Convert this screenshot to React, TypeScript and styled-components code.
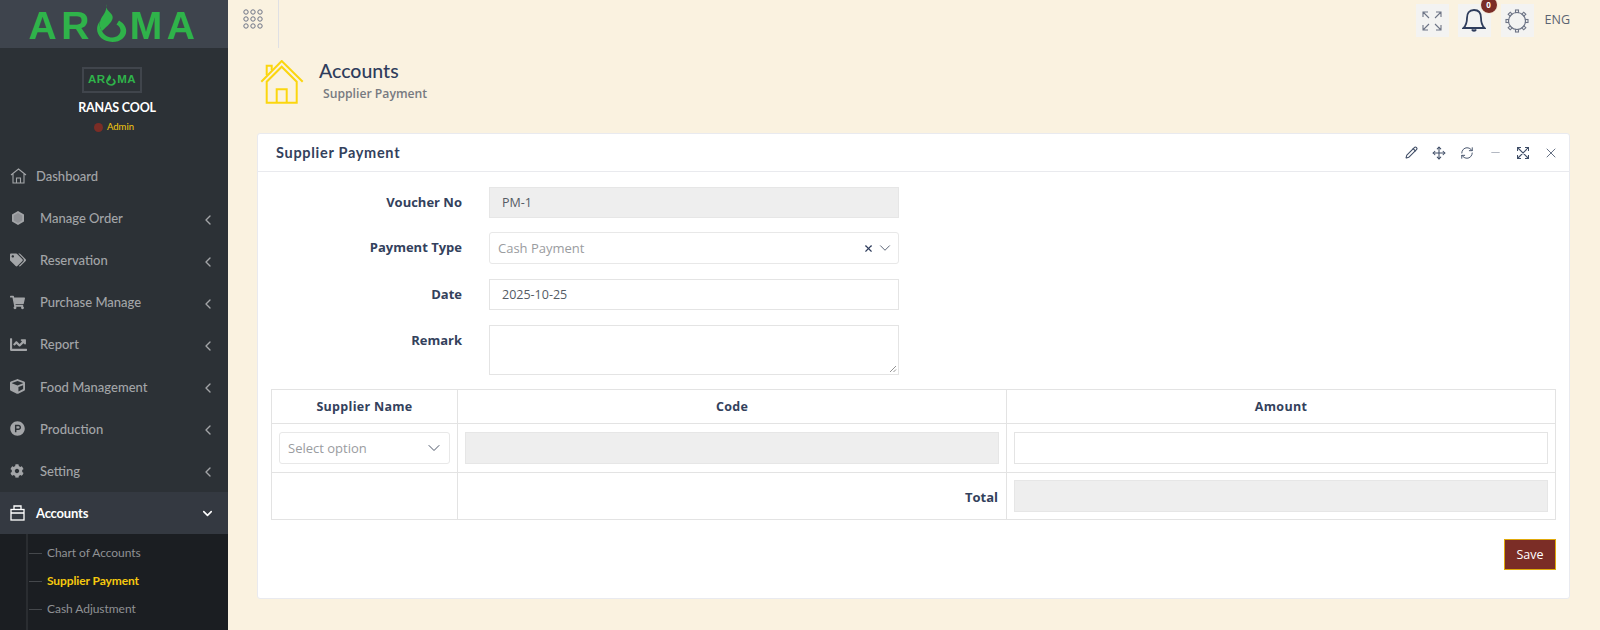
import React from "react";
import styled, { createGlobalStyle } from "styled-components";
import { FaTags, FaShoppingCart, FaChartLine, FaCube, FaProductHunt, FaCog } from "react-icons/fa";
import { ChevronLeft, ChevronDown, X, Pencil, Move, RefreshCw, Minus } from "lucide-react";

const Global = createGlobalStyle`
  html, body { margin: 0; padding: 0; height: 630px; overflow: hidden; }
  body { font-family: "Open Sans", "Noto Sans", sans-serif; background: #faf2e0; }
  * { box-sizing: border-box; }
`;

const Page = styled.div`
  display: flex;
  width: 1600px;
  height: 630px;
  overflow: hidden;
`;

const Sidebar = styled.aside`
  width: 228px;
  flex: none;
  background: #2c3136;
  display: flex;
  flex-direction: column;
  font-family: "Lato", sans-serif;
`;

const Brand = styled.div`
  height: 48px;
  background: #3e444d;
  display: flex;
  align-items: flex-end;
  justify-content: center;
  padding: 0 0 3px 0;
  color: #2fb34a;
  font: bold 39px/1 "Liberation Sans", sans-serif;
  letter-spacing: 4.5px;
`;

const Profile = styled.div`
  display: flex;
  flex-direction: column;
  align-items: center;
  padding: 19px 0 0 6px;
  height: 107px;
`;

const MiniLogo = styled.div`
  width: 60px;
  height: 26px;
  margin-left: -10px;
  border: 2px solid #40454c;
  color: #2fb34a;
  display: flex;
  align-items: center;
  justify-content: center;
  font: bold 11.5px/1 "Liberation Sans", sans-serif;
  letter-spacing: 0.4px;
`;

const UserName = styled.div`
  margin-top: 7px;
  color: #fff;
  font-size: 12.5px;
  font-weight: 700;
  letter-spacing: -0.2px;
  line-height: 16px;
`;

const UserRole = styled.div`
  margin: 3px 0 0 -6px;
  color: #f6c90e;
  font-size: 9.5px;
  line-height: 16px;
  display: flex;
  align-items: center;
  gap: 4px;
`;

const Dot = styled.span`
  width: 9px;
  height: 9px;
  border-radius: 50%;
  background: #7b2d26;
`;

const Nav = styled.nav`
  display: flex;
  flex-direction: column;
`;

const NavItem = styled.div<{ $active?: boolean }>`
  height: 42.1px;
  display: flex;
  align-items: center;
  padding-left: 10px;
  color: ${(p) => (p.$active ? "#ffffff" : "#a3a5a8")};
  background: ${(p) => (p.$active ? "#343941" : "transparent")};
  font-size: 13px;
  font-weight: ${(p) => (p.$active ? 700 : 500)};
  letter-spacing: ${(p) => (p.$active ? "-0.2px" : "0")};
`;

const NavIcon = styled.span<{ $tight?: boolean }>`
  width: ${(p) => (p.$tight ? "26px" : "30px")};
  flex: none;
  display: flex;
  align-items: center;
  svg { display: block; }
`;

const NavLabel = styled.span`
  flex: 1;
`;

const NavCaret = styled.span<{ $open?: boolean }>`
  width: 28px;
  flex: none;
  display: flex;
  margin-top: ${(p) => (p.$open ? "1px" : "3px")};
  svg { display: block; }
`;

const SubNav = styled.div`
  flex: 1;
  background: #1b1e22;
  position: relative;
  padding-top: 5px;
  display: flex;
  flex-direction: column;
  &::before {
    content: "";
    position: absolute;
    left: 26px;
    top: 0;
    bottom: 0;
    width: 2px;
    background: #2a2d31;
  }
`;

const SubItem = styled.div<{ $active?: boolean }>`
  height: 28px;
  display: flex;
  align-items: center;
  padding-left: 47px;
  position: relative;
  font-size: 12px;
  letter-spacing: ${(p) => (p.$active ? "-0.1px" : "-0.05px")};
  color: ${(p) => (p.$active ? "#f6c90e" : "#8f9194")};
  font-weight: ${(p) => (p.$active ? 700 : 400)};
  &::before {
    content: "";
    position: absolute;
    left: 29px;
    top: 50%;
    width: 13px;
    height: 1px;
    background: #45484c;
  }
`;

const Main = styled.main`
  flex: 1;
  display: flex;
  flex-direction: column;
  min-width: 0;
`;

const TopBar = styled.header`
  height: 48px;
  display: flex;
  align-items: flex-start;
  padding-right: 30px;
`;

const Launcher = styled.div`
  width: 51px;
  height: 48px;
  border-right: 1px solid #dfe0e4;
  padding: 9px 0 0 15px;
  svg { display: block; }
`;

const TopRight = styled.div`
  margin-left: auto;
  display: flex;
  align-items: flex-start;
  padding-top: 4px;
`;

const IconBox = styled.div<{ $mr: number; $w: number }>`
  position: relative;
  width: ${(p) => p.$w}px;
  height: 33px;
  margin-right: ${(p) => p.$mr}px;
  background: #f3f3f2;
  display: flex;
  align-items: center;
  justify-content: center;
`;

const Badge = styled.span`
  position: absolute;
  top: -8px;
  right: -7px;
  width: 18px;
  height: 18px;
  border-radius: 50%;
  background: #7b2d26;
  border: 1px solid #faf2e0;
  color: #fff;
  font-size: 8px;
  font-weight: 700;
  line-height: 16px;
  text-align: center;
`;

const Lang = styled.span`
  font-size: 12.5px;
  line-height: 32px;
  color: #5b6472;
  margin-left: 1px;
`;

const PageHead = styled.div`
  display: flex;
  height: 85px;
  padding: 11px 0 0 32px;
`;

const HouseWrap = styled.div`
  width: 59px;
  padding-top: 1px;
  svg { display: block; }
`;

const TitleBlock = styled.div`
  display: flex;
  flex-direction: column;
`;

const PageTitle = styled.h1`
  margin: 0;
  font-family: "Lato", sans-serif;
  font-weight: 500;
  font-size: 19.5px;
  line-height: 24px;
  color: #2f3d5c;
`;

const PageSub = styled.div`
  margin: 1px 0 0 4px;
  font-size: 12.2px;
  font-weight: 600;
  line-height: 20px;
  color: #777a80;
`;

const Card = styled.section`
  margin: 0 30px 0 29px;
  height: 466px;
  background: #fff;
  border: 1px solid #e9eaef;
  border-radius: 3px;
  display: flex;
  flex-direction: column;
`;

const CardHead = styled.div`
  height: 38px;
  flex: none;
  border-bottom: 1px solid #e9eaee;
  display: flex;
  align-items: center;
  padding: 0 4px 0 18px;
`;

const CardTitle = styled.h2`
  margin: 0;
  font-family: "Lato", sans-serif;
  font-size: 14.5px;
  font-weight: 700;
  color: #33415c;
  letter-spacing: 0.7px;
`;

const CardTools = styled.div`
  margin-left: auto;
  display: flex;
  align-items: center;
  color: #3f4d66;
`;

const ToolSlot = styled.span<{ $muted?: boolean }>`
  width: 28px;
  display: flex;
  align-items: center;
  justify-content: center;
  color: ${(p) => (p.$muted ? "#8a92a0" : "inherit")};
  svg { display: block; }
`;

const CardBody = styled.div`
  flex: 1;
  padding: 15px 13px 0 13px;
  display: flex;
  flex-direction: column;
`;

const FormRow = styled.div<{ $h: number; $mb: number }>`
  display: grid;
  grid-template-columns: 191px 410px;
  column-gap: 27px;
  height: ${(p) => p.$h}px;
  margin-bottom: ${(p) => p.$mb}px;
`;

const Label = styled.label`
  text-align: right;
  font-size: 13px;
  font-weight: 700;
  line-height: 30px;
  color: #33415c;
`;

const Field = styled.div<{ $readonly?: boolean }>`
  border: 1px solid ${(p) => (p.$readonly ? "#e6e6e6" : "#e4e4e4")};
  background: ${(p) => (p.$readonly ? "#eeeeee" : "#fff")};
  color: #555b64;
  font-size: 12.5px;
  line-height: 29px;
  padding: 0 12px;
  height: 100%;
  position: relative;
`;

const Grip = styled.svg`
  position: absolute;
  right: 1px;
  bottom: 1px;
`;

const SelectBox = styled.div<{ $small?: boolean }>`
  height: 100%;
  border: 1px solid #e8e8e8;
  border-radius: 3px;
  background: #fff;
  color: #9a9ca0;
  font-size: 13px;
  display: flex;
  align-items: center;
  padding: 0 ${(p) => (p.$small ? "5px" : "4px")} 0 8px;
`;

const SelectText = styled.span`
  flex: 1;
`;

const ClearX = styled.span`
  display: flex;
  color: #2f3d5c;
  margin-right: 2px;
`;

const Caret = styled.span`
  display: flex;
  color: #4b5568;
`;

const Table = styled.table`
  width: 1285px;
  margin-top: 2px;
  border-collapse: collapse;
  table-layout: fixed;
  border: 1px solid #e3e3e3;
  th, td { border: 1px solid #e3e3e3; padding: 0; }
`;

const Th = styled.th`
  height: 34px;
  font-size: 12.5px;
  font-weight: 700;
  color: #33415c;
  letter-spacing: 0.3px;
`;

const Td = styled.td<{ $h: number; $right?: boolean }>`
  height: ${(p) => p.$h}px;
  text-align: ${(p) => (p.$right ? "right" : "left")};
  vertical-align: middle;
`;

const CellPad = styled.div`
  height: 32px;
  margin: 0 7px;
`;

const TotalLabel = styled.span`
  font-size: 13px;
  font-weight: 700;
  color: #33415c;
  padding-right: 8px;
`;

const Actions = styled.div`
  display: flex;
  justify-content: flex-end;
  margin-top: 19px;
`;

const SaveButton = styled.button`
  width: 52px;
  height: 31px;
  background: #7b2d26;
  border: 1px solid #e0a90b;
  color: #fff;
  font-family: inherit;
  font-size: 12.5px;
  padding: 0;
`;

const FlameSvg = styled.svg<{ $mx: number; $mb: number }>`
  display: block;
  flex: none;
  margin: 0 ${(p) => p.$mx}px ${(p) => p.$mb}px;
`;

const Flame = ({ w, mx, mb }: { w: number; mx: number; mb: number }) => (
  <FlameSvg $mx={mx} $mb={mb} width={w} height={(w * 38) / 36} viewBox="0 0 36 38" fill="currentColor">
    <path d="M12.300 0C11 6 17 8 18.500 12C20 17 13 22 8 27C5 23 5 18 8 13C11 9 13 5 12.300 0z" />
    <path d="M6 17C-1 26 5 38 18.500 38C32 38 38 24 25 16.500L22.500 20.500C30 25 26 33.500 18.500 33.500C13.500 33.500 10 31 8 27C6 24 5 21 6 17z" />
  </FlameSvg>
);

const menu = [
  { label: "Manage Order", icon: <svg width="16" height="16" viewBox="0 0 16 16"><path d="M8 1l6 3.400v7.200L8 15l-6-3.400V4.400z" fill="#a3a5a8" /><path d="M8 3l4.200 2.400v5.200L8 13l-4.200-2.400V5.400z" fill="#8f9195" /></svg> },
  { label: "Reservation", icon: <FaTags size={16} /> },
  { label: "Purchase Manage", icon: <FaShoppingCart size={15} /> },
  { label: "Report", icon: <FaChartLine size={17} /> },
  { label: "Food Management", icon: <FaCube size={15} /> },
  { label: "Production", icon: <FaProductHunt size={15} /> },
  { label: "Setting", icon: <FaCog size={14} /> },
];

export default function App() {
  return (
    <Page>
      <Global />
      <Sidebar>
        <Brand>
          AR<Flame w={36} mx={0} mb={3} />MA
        </Brand>
        <Profile>
          <MiniLogo>AR<Flame w={12} mx={0} mb={1} />MA</MiniLogo>
          <UserName>RANAS COOL</UserName>
          <UserRole><Dot />Admin</UserRole>
        </Profile>
        <Nav>
          <NavItem>
            <NavIcon $tight>
              <svg width="17" height="16" viewBox="0 0 17 16" fill="none" stroke="#a3a5a8" strokeWidth="1.1">
                <path d="M1 7l7.500-6L16 7M3 6v9h11V6M6.500 15v-5h4v5" />
              </svg>
            </NavIcon>
            <NavLabel>Dashboard</NavLabel>
          </NavItem>
          {menu.map((m) => (
            <NavItem key={m.label}>
              <NavIcon>{m.icon}</NavIcon>
              <NavLabel>{m.label}</NavLabel>
              <NavCaret><ChevronLeft size={16} strokeWidth={2} /></NavCaret>
            </NavItem>
          ))}
          <NavItem $active>
            <NavIcon $tight>
              <svg width="15" height="16" viewBox="0 0 15 16" fill="none" stroke="#fff" strokeWidth="1.3">
                <rect x="1" y="4.500" width="13" height="10.500" />
                <path d="M1 8h13M4 4.500V1h7v3.500" />
              </svg>
            </NavIcon>
            <NavLabel>Accounts</NavLabel>
            <NavCaret $open><ChevronDown size={15} strokeWidth={2.5} /></NavCaret>
          </NavItem>
        </Nav>
        <SubNav>
          <SubItem>Chart of Accounts</SubItem>
          <SubItem $active>Supplier Payment</SubItem>
          <SubItem>Cash Adjustment</SubItem>
        </SubNav>
      </Sidebar>
      <Main>
        <TopBar>
          <Launcher>
            <svg width="20" height="20" viewBox="0 0 20 20" fill="none" stroke="#6d7486" strokeWidth="1">
              {[3, 10, 17].map((y) => [3, 10, 17].map((x) => <circle key={`${x}-${y}`} cx={x} cy={y} r="2.200" />))}
            </svg>
          </Launcher>
          <TopRight>
            <IconBox $w={33} $mr={9}>
              <svg width="20" height="20" viewBox="0 0 20 20" fill="none" stroke="#6d7486" strokeWidth="1.1">
                <path d="M1 6V1h5M1 1l6 6M14 1h5v5M19 1l-6 6M1 14v5h5M1 19l6-6M19 14v5h-5M19 19l-6-6" />
              </svg>
            </IconBox>
            <IconBox $w={33} $mr={10}>
              <svg width="24" height="26" viewBox="0 0 24 26" fill="none" stroke="#2f3d5c" strokeWidth="1.800">
                <path d="M12 2c-5 0-7 3.500-7 8 0 5-1.500 8-3.500 10h21c-2-2-3.500-5-3.500-10 0-4.500-2-8-7-8z" />
                <path d="M10 21.500c.5 1.800 3.500 1.800 4 0" fill="#2f3d5c" />
              </svg>
              <Badge>0</Badge>
            </IconBox>
            <IconBox $w={33} $mr={10}>
              <svg width="24" height="24" viewBox="0 0 24 24" fill="none" stroke="#6d7486" strokeWidth="1.100">
                <circle cx="12" cy="12" r="8.500" />
                {[0, 45, 90, 135, 180, 225, 270, 315].map((a) => (
                  <rect key={a} x="10.500" y="1" width="3" height="2.500" fill="#f3f3f2" transform={`rotate(${a} 12 12)`} />
                ))}
              </svg>
            </IconBox>
            <Lang>ENG</Lang>
          </TopRight>
        </TopBar>
        <PageHead>
          <HouseWrap>
            <svg width="44" height="44" viewBox="0 0 44 44" fill="none" stroke="#fbd60f" strokeWidth="2">
              <path d="M1.300 21.700L21.700 1l21 20.700" />
              <path d="M6.700 42.700V21.700l15-15 15 15v21z" />
              <path d="M16.700 42.700V29.300h10v13.400" />
              <path d="M6.700 15V5.700h5V10" />
            </svg>
          </HouseWrap>
          <TitleBlock>
            <PageTitle>Accounts</PageTitle>
            <PageSub>Supplier Payment</PageSub>
          </TitleBlock>
        </PageHead>
        <Card>
          <CardHead>
            <CardTitle>Supplier Payment</CardTitle>
            <CardTools>
              <ToolSlot><Pencil size={13} strokeWidth={2} /></ToolSlot>
              <ToolSlot><Move size={14} strokeWidth={1.800} /></ToolSlot>
              <ToolSlot><RefreshCw size={14} strokeWidth={1.600} /></ToolSlot>
              <ToolSlot $muted><Minus size={13} strokeWidth={1.200} /></ToolSlot>
              <ToolSlot>
                <svg width="12" height="12" viewBox="0 0 12 12" fill="none" stroke="currentColor" strokeWidth="1.100">
                  <path d="M.5 4V.5H4M.5.5l11 11M11.500 8v3.500H8M11.500.5l-11 11M8 .5h3.500V4M.5 8v3.500H4" />
                </svg>
              </ToolSlot>
              <ToolSlot><X size={16} strokeWidth={1.200} /></ToolSlot>
            </CardTools>
          </CardHead>
          <CardBody>
            <FormRow $h={31} $mb={14}>
              <Label>Voucher No</Label>
              <Field $readonly>PM-1</Field>
            </FormRow>
            <FormRow $h={32} $mb={15}>
              <Label>Payment Type</Label>
              <SelectBox>
                <SelectText>Cash Payment</SelectText>
                <ClearX><X size={11} strokeWidth={2.500} /></ClearX>
                <Caret><ChevronDown size={18} strokeWidth={1.200} /></Caret>
              </SelectBox>
            </FormRow>
            <FormRow $h={31} $mb={15}>
              <Label>Date</Label>
              <Field>2025-10-25</Field>
            </FormRow>
            <FormRow $h={50} $mb={12}>
              <Label>Remark</Label>
              <Field>
                <Grip width="8" height="8" viewBox="0 0 8 8" stroke="#777" strokeWidth="0.800">
                  <path d="M1 7l6-6M4.500 7L7 4.500" />
                </Grip>
              </Field>
            </FormRow>
            <Table>
              <colgroup>
                <col style={{ width: 186 }} />
                <col style={{ width: 549 }} />
                <col />
              </colgroup>
              <thead>
                <tr>
                  <Th>Supplier Name</Th>
                  <Th>Code</Th>
                  <Th>Amount</Th>
                </tr>
              </thead>
              <tbody>
                <tr>
                  <Td $h={49}>
                    <CellPad>
                      <SelectBox $small>
                        <SelectText>Select option</SelectText>
                        <Caret><ChevronDown size={20} strokeWidth={1.200} /></Caret>
                      </SelectBox>
                    </CellPad>
                  </Td>
                  <Td $h={49}><CellPad><Field $readonly /></CellPad></Td>
                  <Td $h={49}><CellPad><Field /></CellPad></Td>
                </tr>
                <tr>
                  <Td $h={47} />
                  <Td $h={47} $right><TotalLabel>Total</TotalLabel></Td>
                  <Td $h={47}><CellPad><Field $readonly /></CellPad></Td>
                </tr>
              </tbody>
            </Table>
            <Actions>
              <SaveButton>Save</SaveButton>
            </Actions>
          </CardBody>
        </Card>
      </Main>
    </Page>
  );
}
